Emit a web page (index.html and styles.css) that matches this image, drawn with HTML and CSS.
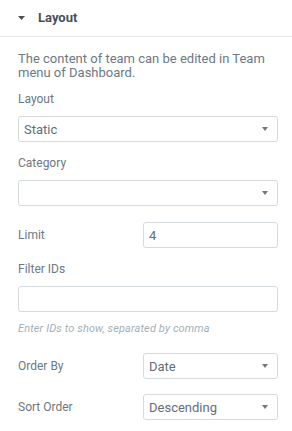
FILE: index.html
```html
<!DOCTYPE html>
<html>
<head>
<meta charset="utf-8">
<link rel="stylesheet" href="styles.css">
</head>
<body>
<div class="panel">
  <div class="section-head">
    <svg class="caret" width="7" height="4" viewBox="0 0 7 4"><path d="M0 0h7L3.5 4z"/></svg>
    <span class="section-title">Layout</span>
  </div>
  <div class="section-body">
    <p class="desc">The content of team can be edited in Team menu of Dashboard.</p>

    <div class="field stacked f-layout">
      <div class="label">Layout</div>
      <div class="control select"><span class="value">Static</span><span class="arrow"></span></div>
    </div>

    <div class="field stacked f-category">
      <div class="label">Category</div>
      <div class="control select"><span class="value"></span><span class="arrow"></span></div>
    </div>

    <div class="field inline f-limit">
      <div class="label">Limit</div>
      <div class="control"><span class="value">4</span></div>
    </div>

    <div class="field stacked f-filter">
      <div class="label">Filter IDs</div>
      <div class="control"><span class="value"></span></div>
      <div class="help">Enter IDs to show, separated by comma</div>
    </div>

    <div class="field inline f-order">
      <div class="label">Order By</div>
      <div class="control select"><span class="value">Date</span><span class="arrow"></span></div>
    </div>

    <div class="field inline f-sort">
      <div class="label">Sort Order</div>
      <div class="control select"><span class="value">Descending</span><span class="arrow"></span></div>
    </div>
  </div>
</div>
</body>
</html>
```

FILE: styles.css
```css
* { box-sizing: border-box; }
html, body { margin: 0; padding: 0; background: #fff; }
body { font-family: Roboto, "Noto Sans", sans-serif; color: #6d7882; }

.section-head {
  height: 37px;
  border-bottom: 1px solid #e6e9ec;
  display: flex;
  align-items: center;
  padding-left: 18px;
  padding-bottom: 1px;
}
.caret { fill: #495157; margin-right: 13px; }
.section-title {
  font-size: 13px;
  font-weight: 700;
  color: #495157;
  line-height: 14px;
}

.section-body { padding: 15px 14px 0 18px; }

.desc {
  margin: 0 0 12px;
  font-size: 13px;
  line-height: 14px;
  color: #6d7882;
}

.label { font-size: 12px; line-height: 14px; color: #6d7882; }

.stacked .label { margin-bottom: 10px; }

.control {
  height: 26px;
  border: 1px solid #d5dadf;
  border-radius: 3px;
  display: flex;
  align-items: center;
  padding: 0 9px 0 5px;
  font-size: 13px;
  color: #636e78;
}
.control .value { flex: 1; }
.arrow {
  width: 0; height: 0;
  border-left: 3.5px solid transparent;
  border-right: 3.5px solid transparent;
  border-top: 4px solid #6d7882;
}

.inline {
  display: grid;
  grid-template-columns: 1fr 135px;
  align-items: center;
}

.f-category { margin-top: 14px; }
.f-limit { margin-top: 16px; }
.f-filter { margin-top: 14px; }
.f-order { margin-top: 17px; }
.f-sort { margin-top: 15px; }

.help {
  margin-top: 10px;
  font-size: 11px;
  line-height: 14px;
  font-style: italic;
  letter-spacing: 0.12px;
  color: #a4afb7;
}
```
